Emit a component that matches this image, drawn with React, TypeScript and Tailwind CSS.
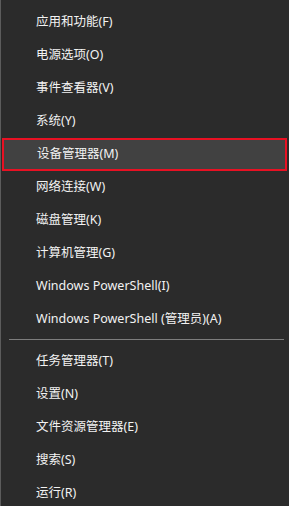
const topItems = [
  '应用和功能(F)',
  '电源选项(O)',
  '事件查看器(V)',
  '系统(Y)',
  '设备管理器(M)',
  '网络连接(W)',
  '磁盘管理(K)',
  '计算机管理(G)',
  'Windows PowerShell(I)',
  'Windows PowerShell (管理员)(A)',
];

const bottomItems = ['任务管理器(T)', '设置(N)', '文件资源管理器(E)', '搜索(S)', '运行(R)'];

function Item({ label, active }: { label: string; active?: boolean }) {
  return (
    <div
      className={
        active
          ? 'h-[33px] flex items-center pl-[33px] ml-px mr-[2px] bg-[#414141] border-2 border-[#e81123]'
          : 'h-[33px] flex items-center pl-[35px]'
      }
    >
      <span className="text-[12.5px] text-[#f2f2f2] leading-none whitespace-nowrap">{label}</span>
    </div>
  );
}

export default function App() {
  return (
    <div
      className="w-[289px] h-[506px] overflow-hidden bg-[#2b2b2b] border-l border-[#5c5c5c] pt-[6px]"
      style={{ fontFamily: '"Noto Sans", "Noto Sans CJK SC", sans-serif' }}
    >
      {topItems.map((t) => (
        <Item key={t} label={t} active={t === '设备管理器(M)'} />
      ))}
      <div className="mt-[3px] mb-[5px] ml-[8px] mr-[5px] h-px bg-[#7d7d7d]" />
      {bottomItems.map((t) => (
        <Item key={t} label={t} />
      ))}
    </div>
  );
}
